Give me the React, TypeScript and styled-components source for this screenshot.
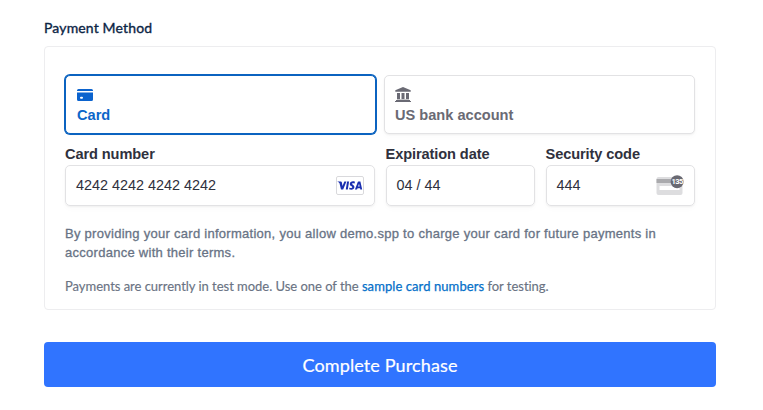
import React from "react";
import styled, { createGlobalStyle } from "styled-components";

const GlobalStyle = createGlobalStyle`
  * { box-sizing: border-box; }
  html { background: #fff; }
  body { margin: 0; font-family: "Liberation Sans", Arial, sans-serif; overflow: hidden; }
`;

const Page = styled.main`
  width: 763px;
  height: 410px;
  padding: 18px 47px 0 44px;
  background: #fff;
`;

const Title = styled.h2`
  margin: 0 0 8px;
  height: 20px;
  font: 400 14px/20px Lato, sans-serif;
  letter-spacing: 0.15px;
  color: #0b2545;
  -webkit-text-stroke: 0.35px #0b2545;
`;

const Panel = styled.section`
  height: 264px;
  padding: 28px 20px 0;
  border: 1px solid #ededef;
  border-radius: 4px;
`;

const Tabs = styled.div`
  display: grid;
  grid-template-columns: 311px 311px;
  gap: 8px;
  height: 59px;
`;

const Tab = styled.button<{ $active?: boolean }>`
  display: flex;
  flex-direction: column;
  align-items: flex-start;
  gap: 4px;
  padding: ${(p) => (p.$active ? "11px 11px 0" : "11px 10px 0")};
  border: 1px solid ${(p) => (p.$active ? "#0b63c0" : "#e2e2e4")};
  border-radius: 5px;
  box-shadow: ${(p) =>
    p.$active ? "0 0 0 1px #0b63c0, 0 1px 2px rgba(0,0,0,.05)" : "0 1px 2px rgba(0,0,0,.05), 0 3px 6px rgba(0,0,0,.02)"};
  background: #fff;
  color: ${(p) => (p.$active ? "#0b66c9" : "#6a6a74")};
  font: 700 14.6px/18px "Liberation Sans", Arial, sans-serif;
  svg { display: block; }
`;

const Fields = styled.div`
  display: grid;
  grid-template-columns: 310px 149.5px 149.5px;
  gap: 10.5px;
  margin-top: 11px;
`;

const Field = styled.label`
  display: block;
`;

const Label = styled.span`
  display: block;
  height: 20px;
  font-size: 14.6px;
  line-height: 19px;
  font-weight: 700;
  letter-spacing: -0.1px;
  color: #30313d;
  white-space: nowrap;
`;

const Input = styled.span`
  display: flex;
  align-items: center;
  justify-content: space-between;
  height: 41px;
  padding: 0 10px;
  border: 1px solid #e2e2e4;
  border-radius: 5px;
  box-shadow: 0 1px 2px rgba(0,0,0,.05), 0 3px 6px rgba(0,0,0,.02);
  font-size: 14.4px;
  line-height: 18px;
  color: #30313d;
  svg { display: block; }
`;

const Value = styled.span`
  padding-bottom: 2px;
`;

const Terms = styled.p`
  margin: 18px 0 0;
  font-size: 13px;
  line-height: 19px;
  letter-spacing: 0.275px;
  color: #687385;
  -webkit-text-stroke: 0.3px #687385;
  white-space: nowrap;
`;

const TestNote = styled.p`
  margin: 14px 0 0;
  font: 400 13px/20px Lato, sans-serif;
  letter-spacing: -0.03px;
  color: #6a7383;
  -webkit-text-stroke: 0.15px #6a7383;
  white-space: nowrap;
`;

const Link = styled.a`
  color: #0570c9;
  letter-spacing: 0.08px;
  -webkit-text-stroke: 0.25px #0570c9;
`;

const Submit = styled.button`
  display: block;
  width: 672px;
  height: 45px;
  margin-top: 32px;
  padding: 0;
  border: 0;
  border-radius: 4px;
  background: #3074ff;
  color: #fff;
  font: 400 18px/46px Lato, sans-serif;
  letter-spacing: 0.12px;
  -webkit-text-stroke: 0.2px #fff;
`;

const CardIcon = () => (
  <svg width="16" height="15" viewBox="0 0 16 15" fill="#0b63ce">
    <path d="M0 4V3.5a1.5 1.5 0 0 1 1.5-1.5h13a1.5 1.5 0 0 1 1.5 1.5V4z" />
    <path fillRule="evenodd" d="M0 5.5h16v7a1.5 1.5 0 0 1-1.5 1.5h-13A1.5 1.5 0 0 1 0 12.500zm4 4.2a1 1 0 0 0 0 2h1a1 1 0 0 0 0-2z" />
  </svg>
);

const BankIcon = () => (
  <svg width="16" height="15" viewBox="0 0 16 15" fill="#6a6a74">
    <path d="M8 0l7.7 3.200v1.600H.3V3.200z" />
    <path d="M2 6h3v6.2H2zM6.5 6h3v6.2h-3zM11 6h3v6.2h-3zM1 13h14v1h1v1H0v-1h1z" />
    <path d="M2 12.2h12v.8H2z" fill="#bdbdc1" />
  </svg>
);

const VisaIcon = () => (
  <svg width="28" height="19" viewBox="0 0 28 19">
    <rect x=".5" y=".5" width="27" height="18" rx="1.5" fill="#fff" stroke="#d9d9dc" />
    <g fill="#1a2fb0" transform="translate(-.7 -1.5) scale(1.05 1.16)">
      <path d="M2.2 6h3.1c.5 0 .8.2.9.7l.7 3.2L8.6 6h2l-3.1 7H5.4L4 7.6C3.6 7 2.9 6.6 2.1 6.3z" />
      <path d="M11.2 6h1.9l-1.2 7H10z" />
      <path d="M18.7 6.2l-.3 1.6c-1.2-.6-2.6-.4-2.6.2 0 .8 2.4.9 2.4 2.8 0 2.3-2.9 2.8-5 2l.3-1.7c1.3.7 2.7.5 2.7-.1 0-.9-2.4-.9-2.4-2.8 0-2.2 2.8-2.8 4.9-2z" />
      <path fillRule="evenodd" d="M22.1 6h1.8l1.7 7h-1.8l-.2-1.2h-2.4l-.5 1.2h-2l2.6-6.4c.1-.4.4-.6.8-.6zm.5 1.9-.9 2.5h1.5z" />
    </g>
  </svg>
);

const SecurityIcon = () => (
  <svg width="28" height="21" viewBox="-0.5 0 28 21" overflow="visible">
    <rect x="0" y="2" width="26" height="18" rx="2" fill="#dddddf" />
    <path d="M0 4h26v4H0z" fill="#aaaaad" />
    <path d="M3 11h20v4H3z" fill="#fff" />
    <circle cx="20.6" cy="6.7" r="6.5" fill="#696972" />
    <text
      x="20.6"
      y="9.4"
      textAnchor="middle"
      fontFamily="Roboto, sans-serif"
      fontSize="7.6"
      fontWeight="700"
      fill="#fff"
      letterSpacing="-0.6"
    >
      135
    </text>
  </svg>
);

export default function App() {
  return (
    <>
      <GlobalStyle />
      <Page>
        <Title>Payment Method</Title>
        <Panel>
          <Tabs>
            <Tab type="button" $active>
              <CardIcon />
              Card
            </Tab>
            <Tab type="button">
              <BankIcon />
              US bank account
            </Tab>
          </Tabs>
          <Fields>
            <Field>
              <Label>Card number</Label>
              <Input><Value>4242 4242 4242 4242</Value><VisaIcon /></Input>
            </Field>
            <Field>
              <Label>Expiration date</Label>
              <Input><Value>04 / 44</Value></Input>
            </Field>
            <Field>
              <Label>Security code</Label>
              <Input><Value>444</Value><SecurityIcon /></Input>
            </Field>
          </Fields>
          <Terms>
            By providing your card information, you allow demo.spp to charge your card for future payments in
            <br />
            accordance with their terms.
          </Terms>
          <TestNote>
            Payments are currently in test mode. Use one of the <Link>sample card numbers</Link> for testing.
          </TestNote>
        </Panel>
        <Submit type="button">Complete Purchase</Submit>
      </Page>
    </>
  );
}
